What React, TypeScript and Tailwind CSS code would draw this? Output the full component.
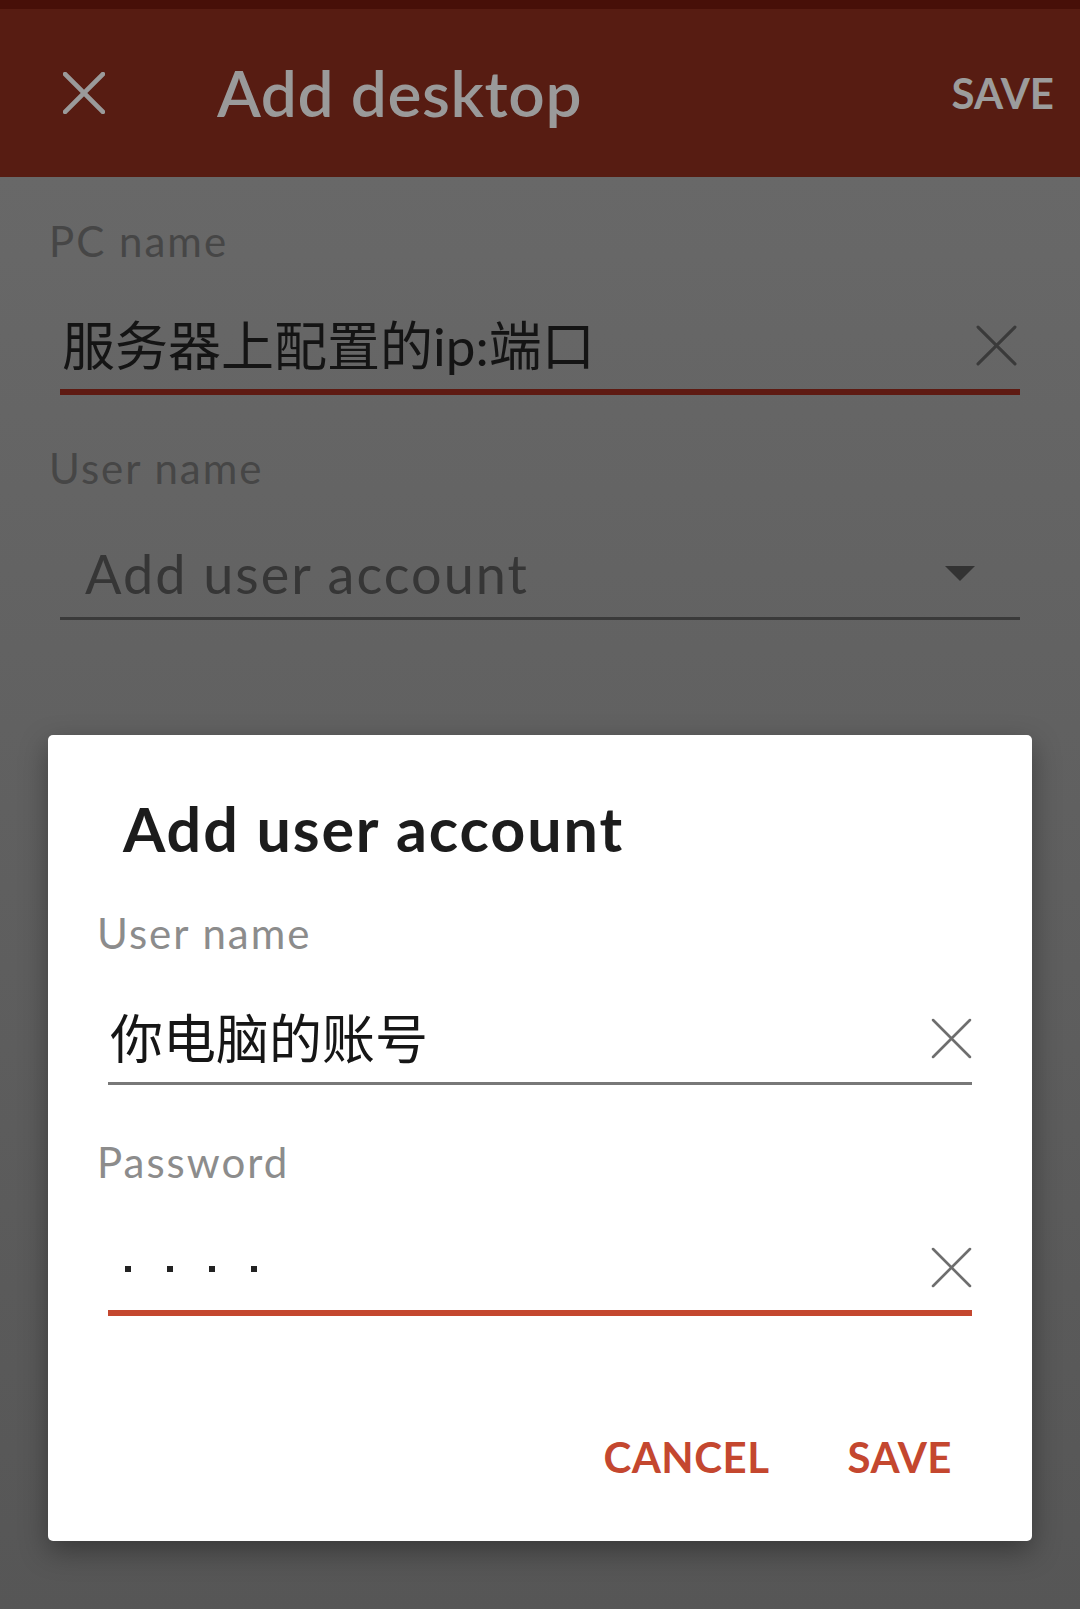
const font = "font-['Lato','Noto_Sans_CJK_SC',sans-serif]";

const CloseIcon = ({ size, stroke, width }: { size: number; stroke: string; width: number }) => (
  <svg width={size} height={size} viewBox="0 0 40 40" fill="none">
    <path d="M2 2L38 38M38 2L2 38" stroke={stroke} strokeWidth={width} strokeLinecap="round" />
  </svg>
);

const AddUserDialog = () => {
  return (
    <div className="absolute left-[48px] top-[735px] w-[984px] h-[806px] bg-white rounded-[5px] shadow-[0_10px_28px_rgba(0,0,0,0.35)] flex flex-col">
      <h2 className="mt-[63px] ml-[75px] text-[61px] leading-[61px] font-bold tracking-[1.9px] text-[#1c1c1c]">
        Add user account
      </h2>

      <label className="mt-[54px] ml-[49px] text-[42px] leading-[40px] tracking-[2px] text-[#8c8c8c]">User name</label>
      <div className="mx-[60px] h-[132px] pt-[42px] border-b-[3px] border-[#787878] flex items-center justify-between">
        <span className="pl-[2px] text-[53px] leading-[53px] text-[#161616]">你电脑的账号</span>
        <CloseIcon size={41} stroke="#6e6e6e" width={2.6} />
      </div>

      <label className="mt-[57px] ml-[49px] text-[42px] leading-[40px] tracking-[2px] text-[#8c8c8c]">Password</label>
      <div className="mx-[60px] h-[134px] pt-[42px] border-b-[6px] border-[#c4472f] flex items-center justify-between">
        <div className="flex items-center gap-[36px] pl-[17px] pt-[4px]">
          <span className="w-[6px] h-[6px] bg-[#222]" />
          <span className="w-[6px] h-[6px] bg-[#222]" />
          <span className="w-[6px] h-[6px] bg-[#222]" />
          <span className="w-[6px] h-[6px] bg-[#222]" />
        </div>
        <CloseIcon size={41} stroke="#6e6e6e" width={2.6} />
      </div>

      <div className="mt-[120px] flex justify-end gap-[78px] pr-[80px]">
        <button className="text-[42px] leading-[42px] font-bold tracking-[0.5px] text-[#c4472f]">CANCEL</button>
        <button className="text-[42px] leading-[42px] font-bold tracking-[0.5px] text-[#c4472f]">SAVE</button>
      </div>
    </div>
  );
};

export default function App() {
  return (
    <div className={`relative w-full h-[1609px] overflow-hidden flex flex-col ${font}`}>
      <header className="h-[177px] bg-[#571c12] flex flex-col">
        <div className="h-[9px] bg-[#470f08]" />
        <div className="flex-1 flex items-center pl-[63px] pr-[26px]">
          <CloseIcon size={42} stroke="#9a9a9a" width={4.5} />
          <h1 className="ml-[112px] text-[64px] leading-[64px] font-semibold tracking-[0.6px] text-[#9a9a9a]">
            Add desktop
          </h1>
          <button className="ml-auto text-[42px] leading-[42px] font-bold text-[#9c9c9c]">SAVE</button>
        </div>
      </header>

      <main className="flex-1 bg-linear-to-b from-[#686868] to-[#565656] flex flex-col pl-[49px] pr-[60px]">
        <label className="mt-[44px] text-[42px] leading-[40px] tracking-[2px] text-[#464646]">PC name</label>
        <div className="ml-[11px] h-[134px] pt-[40px] border-b-[6px] border-[#5e1a12] flex items-center justify-between">
          <span className="pl-[2px] text-[53px] leading-[53px] text-[#141414]">服务器上配置的ip:端口</span>
          <span className="mr-[3px]">
            <CloseIcon size={41} stroke="#3a3a3a" width={3} />
          </span>
        </div>

        <label className="mt-[53px] text-[42px] leading-[40px] tracking-[2px] text-[#464646]">User name</label>
        <div className="ml-[11px] h-[132px] pt-[42px] border-b-[3px] border-[#3a3a3a] flex items-center justify-between">
          <span className="pl-[25px] text-[54px] leading-[54px] tracking-[2px] text-[#363636]">Add user account</span>
          <svg width="30" height="15" viewBox="0 0 30 15" className="mr-[45px]">
            <path d="M0 0H30L15 15Z" fill="#333333" />
          </svg>
        </div>
      </main>

      <AddUserDialog />
    </div>
  );
}
